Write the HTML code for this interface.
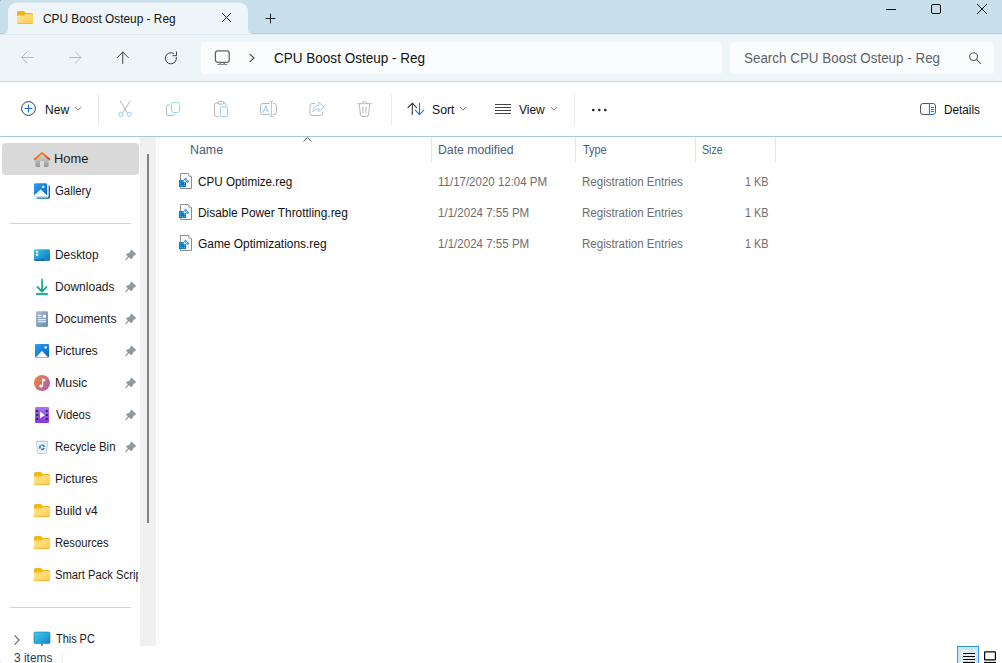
<!DOCTYPE html>
<html lang="en">
<head>
<meta charset="utf-8">
<title>CPU Boost Osteup - Reg</title>
<style>
*{box-sizing:border-box;margin:0;padding:0}
html,body{width:1002px;height:663px;overflow:hidden;background:#fff}
body{position:relative;font-family:"Liberation Sans",sans-serif;font-size:12px;color:#111}
.abs{position:absolute}
.t{position:absolute;white-space:nowrap;line-height:16px;height:16px;transform-origin:0 50%}
svg{position:absolute;overflow:visible}
#titlebar{left:0;top:0;width:1002px;height:34px;background:#c8e0eb;border-bottom:1px solid #b9d1de}
#tab{left:8px;top:3px;width:240px;height:31px;background:#edf5f9;border-radius:8px 8px 0 0}
#nav{left:0;top:34px;width:1002px;height:47px;background:#edf5f9}
#navline{left:0;top:81px;width:1002px;height:1px;background:#c8d8e1}
#addr{left:201px;top:42px;width:521px;height:32px;background:#fafcfe;border-radius:4px}
#search{left:730px;top:42px;width:264px;height:32px;background:#fafcfe;border-radius:4px}
#toolbar{left:0;top:82px;width:1002px;height:54px;background:#fff}
#toolline{left:0;top:136px;width:1002px;height:1px;background:#a9c7d6}
.vsep{position:absolute;width:1px;background:#eaeaea}
#side{left:0;top:137px;width:140px;height:509px;background:#fff;overflow:hidden}
#track{left:140px;top:137px;width:16px;height:509px;background:#f0f0f0}
#thumb{left:147px;top:154px;width:2px;height:369px;background:#828282}
#sel{left:2px;top:143px;width:137px;height:32px;background:#d9d9d9;border-radius:4px}
.hl{position:absolute;left:10px;width:121px;height:1px;background:#d2d2d2}
.nav-t{color:#1a1a1a}
.hdr{color:#4c607a}
.gray{color:#6d6d6d}
.colsep{position:absolute;top:137px;width:1px;height:25px;background:#e5e5e5}
</style>
</head>
<body>
<!-- title bar -->
<div class="abs" id="titlebar"></div>
<div class="abs" id="tab"></div>
<div class="abs" id="nav"></div>
<div class="abs" id="navline"></div>
<div class="abs" id="addr"></div>
<div class="abs" id="search"></div>
<div class="abs" id="toolbar"></div>
<div class="abs" id="toolline"></div>

<div class="abs" style="left:0;top:34px;width:1002px;height:1px;background:#e0ecf3"></div>
<div class="abs" style="left:0;top:0;width:1px;height:1px;background:#93a7b3"></div>
<div class="abs" style="left:0;top:662px;width:1px;height:1px;background:#e4e7e9"></div>
<div class="abs" style="left:14px;top:2px;width:228px;height:1px;background:#dbe7ec"></div>
<!-- tab contents -->
<div class="t" id="tabtitle" style="left:43px;top:11px;transform:scaleX(0.989)">CPU Boost Osteup - Reg</div>


<!-- shared gradients -->
<svg width="0" height="0" style="left:0;top:0">
<defs>
<linearGradient id="gFold" x1="0" y1="0" x2="1" y2="1"><stop offset="0" stop-color="#ffe594"/><stop offset="1" stop-color="#ffcd4c"/></linearGradient>
<linearGradient id="gBlue" x1="0" y1="0" x2="1" y2="1"><stop offset="0" stop-color="#2f9df5"/><stop offset="1" stop-color="#0b63b6"/></linearGradient>
<linearGradient id="gDesk" x1="0" y1="0" x2="1" y2="1"><stop offset="0" stop-color="#33cbe4"/><stop offset="1" stop-color="#0c6fc4"/></linearGradient>
<linearGradient id="gDoc" x1="0" y1="0" x2="1" y2="1"><stop offset="0" stop-color="#a9bdd6"/><stop offset="1" stop-color="#6b89ae"/></linearGradient>
<linearGradient id="gMus" x1="0" y1="0.2" x2="1" y2="0.9"><stop offset="0" stop-color="#f5853a"/><stop offset="1" stop-color="#a957b4"/></linearGradient>
<linearGradient id="gVid" x1="0" y1="0" x2="0" y2="1"><stop offset="0" stop-color="#a974ee"/><stop offset="1" stop-color="#8638d6"/></linearGradient>
<linearGradient id="gRoof" x1="0" y1="0" x2="1" y2="1"><stop offset="0" stop-color="#ff9a1a"/><stop offset="1" stop-color="#d8461a"/></linearGradient>
<linearGradient id="gHouse" x1="0" y1="0" x2="0" y2="1"><stop offset="0" stop-color="#dadada"/><stop offset="1" stop-color="#979797"/></linearGradient>
<linearGradient id="gDl" x1="0" y1="0" x2="0" y2="1"><stop offset="0" stop-color="#23c585"/><stop offset="1" stop-color="#159f93"/></linearGradient>
<linearGradient id="gPc" x1="0" y1="0" x2="1" y2="1"><stop offset="0" stop-color="#3fd0e8"/><stop offset="1" stop-color="#1283cf"/></linearGradient>
<symbol id="folder" viewBox="0 0 16 13" overflow="visible">
<path d="M0 1.6Q0 0 1.6 0H6.4Q7 0 7.4 .5L8.6 2H14.4Q16 2 16 3.6V11.4Q16 13 14.4 13H1.6Q0 13 0 11.4Z" fill="#f2b417"/>
<path d="M0 4.4H7Q7.6 4.4 8 4L8.4 3.6Q8.8 3.3 9.4 3.3H14.6Q16 3.3 16 4.7V11.4Q16 13 14.4 13H1.6Q0 13 0 11.4Z" fill="url(#gFold)"/>
<path d="M.3 12.2Q.8 13 1.6 13H14.4Q15.2 13 15.7 12.2Z" fill="#eaa91a" opacity=".8"/>
</symbol>
<symbol id="pin" viewBox="0 0 22 20" overflow="visible">
<path d="M11.6 5L16 9.06L13.3 10.9L11.9 13.7L10.6 13.6L9.06 12.1L5.9 14.95L5.4 14.35L8.16 11.6L6.5 9.97L6.5 9.2L9.97 7.7L10.4 5.9Z" fill="#8c999f" stroke="#8c999f" stroke-width=".5" stroke-linejoin="round"/>
</symbol>
<symbol id="reg" viewBox="0 0 15 18" overflow="visible">
<path d="M2.500 1.500H10.500L13.500 4.500V16.500H2.500Z" fill="#fff" stroke="#8e8e8e" stroke-width="1" stroke-linejoin="round"/>
<path d="M10.500 1.500V4.500H13.500" fill="#f2f2f2" stroke="#9a9a9a" stroke-width=".8" stroke-linejoin="round"/>
<rect x="5" y="4" width="6" height="11" fill="#f3f5f7"/>
<path d="M1 8H5.700V10.300H8V15H1Z" fill="#0b79c8"/>
<g fill="#49c0fb"><rect x="1.900" y="8.800" width="1" height="1"/><rect x="4" y="8.800" width="1" height="1"/><rect x="1.900" y="11" width="1" height="1"/><rect x="4" y="11" width="1" height="1" fill="#0b5fa3"/><rect x="6.100" y="11" width="1" height="1"/><rect x="1.900" y="13.100" width="1" height="1"/><rect x="4" y="13.100" width="1" height="1"/><rect x="6.100" y="13.100" width="1" height="1"/></g>
<path d="M7.500 5.700L9.100 7.300L7.500 8.900L5.900 7.300Z" fill="#1b93de"/><path d="M9.600 7.800L11.200 9.400L9.600 11L8 9.400Z" fill="#1b93de"/>
<rect x="7.100" y="6.900" width=".8" height=".8" fill="#7fd4ff"/><rect x="9.200" y="9" width=".8" height=".8" fill="#7fd4ff"/>
</symbol>
</defs>
</svg>

<!-- tab icons -->
<svg style="left:17px;top:11px" width="16" height="13"><use href="#folder" width="16" height="13"/></svg>
<svg style="left:222px;top:13px" width="9" height="9" viewBox="0 0 9 9"><path d="M0 0L9 9M9 0L0 9" stroke="#1f1f1f" stroke-width="1" fill="none"/></svg>
<svg style="left:265px;top:13px" width="11" height="11" viewBox="0 0 11 11"><path d="M.7 5.5H10.4M5.5 .7V10.4" stroke="#1f1f1f" stroke-width="1" fill="none"/></svg>
<!-- window controls -->
<svg style="left:886px;top:9px" width="10" height="1" viewBox="0 0 10 1"><rect width="10" height="1" fill="#111"/></svg>
<svg style="left:931px;top:4px" width="10" height="10" viewBox="0 0 10 10"><rect x=".5" y=".5" width="9" height="9" rx="1.5" fill="none" stroke="#111" stroke-width="1"/></svg>
<svg style="left:977px;top:4px" width="10" height="10" viewBox="0 0 10 10"><path d="M0 0L10 10M10 0L0 10" stroke="#111" stroke-width="1" fill="none"/></svg>
<!-- nav icons -->
<svg style="left:21px;top:51px" width="13" height="13" viewBox="0 0 13 13"><path d="M12 6.5H.8M6 1L.5 6.5L6 12" stroke="#b3bbc1" stroke-width="1" fill="none" stroke-linecap="round" stroke-linejoin="round"/></svg>
<svg style="left:69px;top:51px" width="13" height="13" viewBox="0 0 13 13"><path d="M.5 6.5H11.7M6.5 1L12 6.5L6.5 12" stroke="#b3bbc1" stroke-width="1" fill="none" stroke-linecap="round" stroke-linejoin="round"/></svg>
<svg style="left:116px;top:51px" width="13" height="13" viewBox="0 0 13 13"><path d="M6.75 12.5V1M1.2 6.6L6.75 1L12.3 6.6" stroke="#444" stroke-width="1" fill="none" stroke-linecap="round" stroke-linejoin="round"/></svg>
<svg style="left:164px;top:51px" width="14" height="14" viewBox="0 0 14 14"><path d="M12.4 6.3A5.6 5.6 0 1 1 9.6 2.35M12.5 1V4.7H8.8" stroke="#444" stroke-width="1" fill="none" stroke-linecap="round" stroke-linejoin="round"/></svg>
<svg style="left:214px;top:50px" width="16" height="16" viewBox="0 0 16 16"><rect x="1.4" y=".9" width="13.8" height="11.4" rx="2.2" fill="none" stroke="#636363" stroke-width="1.3"/><path d="M6.2 12.4V14.3M10.2 12.4V14.3" stroke="#636363" stroke-width="1.2"/><path d="M3.6 14.5H13" stroke="#8a8a8a" stroke-width="1" stroke-linecap="round"/></svg>
<svg style="left:249px;top:54px" width="6" height="8" viewBox="0 0 6 8"><path d="M1 .3L5 4L1 7.7" stroke="#444" stroke-width="1.1" fill="none" stroke-linecap="round" stroke-linejoin="round"/></svg>
<svg style="left:969px;top:52px" width="12" height="12" viewBox="0 0 12 12"><circle cx="4.6" cy="4.6" r="3.9" fill="none" stroke="#555" stroke-width="1.1"/><path d="M7.4 7.4L11.3 11.3" stroke="#555" stroke-width="1.1" stroke-linecap="round"/></svg>

<!-- address / search -->
<div class="t" id="addrtxt" style="left:274px;top:50px;font-size:14px;transform:scaleX(0.966)">CPU Boost Osteup - Reg</div>
<div class="t" id="searchtxt" style="left:744px;top:50px;font-size:14px;color:#5e6266;transform:scaleX(0.958)">Search CPU Boost Osteup - Reg</div>

<!-- toolbar -->
<div class="t" id="tnew" style="top:102px;left:45px;transform:scaleX(1.003)">New</div>
<div class="t" id="tsort" style="top:102px;left:432px;transform:scaleX(1.022)">Sort</div>
<div class="t" id="tview" style="top:102px;left:519px;transform:scaleX(0.996)">View</div>
<div class="t" id="tdetails" style="top:102px;left:944px;transform:scaleX(0.980)">Details</div>
<div class="vsep" style="left:98px;top:94px;height:32px"></div>
<div class="vsep" style="left:391px;top:94px;height:32px"></div>
<div class="vsep" style="left:574px;top:94px;height:32px"></div>


<!-- tab concave corners -->
<svg style="left:3px;top:29px" width="5" height="5" viewBox="0 0 5 5"><path d="M5 0V5H0A5 5 0 0 0 5 0Z" fill="#edf5f9"/></svg>
<svg style="left:248px;top:29px" width="5" height="5" viewBox="0 0 5 5"><path d="M0 0V5H5A5 5 0 0 1 0 0Z" fill="#edf5f9"/></svg>
<!-- toolbar icons -->
<svg style="left:21px;top:101px" width="15" height="15" viewBox="0 0 15 15"><circle cx="7.5" cy="7.5" r="6.9" fill="#fafafa" stroke="#3d3d3d" stroke-width="1"/><path d="M4 7.5H11M7.5 4V11" stroke="#0f76d8" stroke-width="1.1" stroke-linecap="round"/></svg>
<svg class="chev" style="left:75px;top:107px" width="6" height="4" viewBox="0 0 6 4"><path d="M.4 .5L3 3.2L5.6 .5" stroke="#7a7a7a" stroke-width="1" fill="none" stroke-linecap="round" stroke-linejoin="round"/></svg>
<svg class="chev" style="left:460px;top:107px" width="6" height="4" viewBox="0 0 6 4"><path d="M.4 .5L3 3.2L5.6 .5" stroke="#7a7a7a" stroke-width="1" fill="none" stroke-linecap="round" stroke-linejoin="round"/></svg>
<svg class="chev" style="left:551px;top:107px" width="6" height="4" viewBox="0 0 6 4"><path d="M.4 .5L3 3.2L5.6 .5" stroke="#7a7a7a" stroke-width="1" fill="none" stroke-linecap="round" stroke-linejoin="round"/></svg>
<!-- cut -->
<svg style="left:118px;top:101px" width="14" height="17" viewBox="0 0 14 17"><path d="M2.4 .3L9 11.4M11.9 .3L5.2 11.4" stroke="#b4b4b4" stroke-width="1" fill="none" stroke-linecap="round"/><circle cx="2.8" cy="13.3" r="2.1" fill="none" stroke="#9ccbf3" stroke-width="1"/><circle cx="11.2" cy="13.3" r="2.1" fill="none" stroke="#9ccbf3" stroke-width="1"/></svg>
<!-- copy -->
<svg style="left:166px;top:102px" width="14" height="14" viewBox="0 0 14 14"><path d="M3.6 3.1H2.6Q.5 3.1 .5 5.2V11.4Q.5 13.5 2.6 13.5H6.8Q8.7 13.5 8.9 12" stroke="#b8b8b8" stroke-width="1" fill="none" stroke-linecap="round"/><rect x="5.5" y=".5" width="8" height="10" rx="2.1" fill="none" stroke="#9ccbf3" stroke-width="1"/></svg>
<!-- paste -->
<svg style="left:214px;top:101px" width="14" height="16" viewBox="0 0 14 16"><path d="M4.3 2.2H2.3Q.5 2.2 .5 4V13.7Q.5 15.5 2.3 15.5H4.6M9.7 2.2H10.3Q12 2.2 12 3.9" stroke="#b8b8b8" stroke-width="1" fill="none" stroke-linecap="round"/><rect x="4" y=".5" width="6" height="2.6" rx="1.3" fill="none" stroke="#b8b8b8" stroke-width="1"/><rect x="6.3" y="5.7" width="7.2" height="9.8" rx="1.6" fill="none" stroke="#9ccbf3" stroke-width="1"/></svg>
<!-- rename -->
<svg style="left:260px;top:101px" width="17" height="16" viewBox="0 0 17 16"><path d="M9.4 2.5H3Q.5 2.5 .5 5V11Q.5 13.5 3 13.5H9.4M13.3 2.5H14Q16.5 2.5 16.5 5V11Q16.5 13.5 14 13.5H13.3" stroke="#b8b8b8" stroke-width="1" fill="none" stroke-linecap="round"/><path d="M3.2 11.2L5.8 4.8L8.4 11.2M4.1 9.2H7.5" stroke="#9ccbf3" stroke-width="1" fill="none" stroke-linecap="round" stroke-linejoin="round"/><path d="M9.8 .6H13.100M9.8 15.400H13.100M11.450 .6V15.400" stroke="#9ccbf3" stroke-width="1" fill="none" stroke-linecap="round"/></svg>
<!-- share -->
<svg style="left:309px;top:101px" width="16" height="16" viewBox="0 0 16 16"><path d="M5.600 2.500H3.300Q1 2.500 1 4.800V12.200Q1 14.500 3.300 14.500H11.200Q13.500 14.500 13.500 12.200V11.400" stroke="#b8b8b8" stroke-width="1" fill="none" stroke-linecap="round"/><path d="M9.800 1.200L15.200 6L9.800 10.600V8Q5.600 7.800 4 11Q4.200 4.600 9.800 4Z" stroke="#9ccbf3" stroke-width="1" fill="none" stroke-linejoin="round"/></svg>
<!-- delete -->
<svg style="left:357px;top:101px" width="15" height="16" viewBox="0 0 15 16"><path d="M.8 2.700H14.200M5 2.500Q5 .5 7.500 .5Q10 .5 10 2.500M2.200 2.900L3.500 14Q3.700 15.500 5.200 15.500H9.800Q11.300 15.500 11.500 14L12.800 2.900M6 6V12M9 6V12" stroke="#b8b8b8" stroke-width="1" fill="none" stroke-linecap="round" stroke-linejoin="round"/></svg>
<!-- sort -->
<svg style="left:407px;top:102px" width="18" height="14" viewBox="0 0 18 14"><path d="M5.300 12.500V1.200M1 5.700L5.300 1.200L9.600 5.700" stroke="#3d3d3d" stroke-width="1.100" fill="none" stroke-linecap="round" stroke-linejoin="round"/><path d="M12.500 1.200V12.500M8.300 8.200L12.500 12.600L16.800 8.200" stroke="#1278d6" stroke-width="1.100" fill="none" stroke-linecap="round" stroke-linejoin="round"/></svg>
<!-- view -->
<svg style="left:495px;top:104px" width="16" height="10" viewBox="0 0 16 10"><path d="M0 .5H16M0 3.500H16M0 6.500H16M0 9.500H16" stroke="#444" stroke-width="1" fill="none"/></svg>
<!-- more -->
<svg style="left:591px;top:108px" width="17" height="4" viewBox="0 0 17 4"><circle cx="2.300" cy="2" r="1.300" fill="#1f1f1f"/><circle cx="8.300" cy="2" r="1.300" fill="#1f1f1f"/><circle cx="14.300" cy="2" r="1.300" fill="#1f1f1f"/></svg>
<!-- details -->
<svg style="left:920px;top:103px" width="16" height="12" viewBox="0 0 16 12"><path d="M9.400 .5H3Q.5 .5 .5 3V9Q.5 11.500 3 11.500H9.400" stroke="#555" stroke-width="1" fill="#fbfbfb"/><path d="M9.400 .5H13Q15.500 .5 15.500 3V9Q15.500 11.500 13 11.500H9.400Z" stroke="#0f78d4" stroke-width="1" fill="#fff"/><path d="M11.200 4.500H13.400M11.200 6.500H13.400M11.200 8.500H13.400" stroke="#0f78d4" stroke-width="1" stroke-linecap="round"/></svg>

<!-- sidebar -->
<div class="abs" id="side"></div>
<div class="abs" id="track"></div>
<div class="abs" id="thumb"></div>
<div class="abs" id="sel"></div>
<div class="hl" style="top:223px"></div>
<div class="hl" style="top:607px"></div>
<div class="t nav-t" id="s1" style="left:54px;top:151px;transform:scaleX(1.073)">Home</div>
<div class="t nav-t" id="s2" style="left:55px;top:183px;transform:scaleX(0.949)">Gallery</div>
<div class="t nav-t" id="s3" style="left:55px;top:247px;transform:scaleX(0.990)">Desktop</div>
<div class="t nav-t" id="s4" style="left:55px;top:279px;transform:scaleX(1.003)">Downloads</div>
<div class="t nav-t" id="s5" style="left:55px;top:311px;transform:scaleX(1.014)">Documents</div>
<div class="t nav-t" id="s6" style="left:55px;top:343px;transform:scaleX(0.986)">Pictures</div>
<div class="t nav-t" id="s7" style="left:55px;top:375px;transform:scaleX(1.031)">Music</div>
<div class="t nav-t" id="s8" style="left:56px;top:407px;transform:scaleX(0.950)">Videos</div>
<div class="t nav-t" id="s9" style="left:55px;top:439px;transform:scaleX(0.955)">Recycle Bin</div>
<div class="t nav-t" id="s10" style="left:55px;top:471px;transform:scaleX(0.986)">Pictures</div>
<div class="t nav-t" id="s11" style="left:55px;top:503px;transform:scaleX(0.999)">Build v4</div>
<div class="t nav-t" id="s12" style="left:55px;top:535px;transform:scaleX(0.937)">Resources</div>
<div class="t nav-t" id="s13" style="left:55.3px;top:567px;width:89px;overflow:hidden;transform: scaleX(0.935)">Smart Pack Scripts</div>
<div class="t nav-t" id="s14" style="left:56px;top:631px;transform:scaleX(0.908)">This PC</div>


<!-- sidebar icons -->
<!-- home -->
<svg style="left:33px;top:151px" width="18" height="17" viewBox="0 0 18 17"><path d="M2.400 8.200L9 2.600L15.600 8.200V14.600Q15.600 15.900 14.300 15.900H11V10H7V15.900H3.700Q2.400 15.900 2.400 14.600Z" fill="url(#gHouse)"/><path d="M1.700 8.300L9 1.900L16.300 8.300" stroke="url(#gRoof)" stroke-width="1.900" fill="none" stroke-linecap="round" stroke-linejoin="round"/></svg>
<!-- gallery -->
<svg style="left:34px;top:183px" width="16" height="16" viewBox="0 0 16 16"><path d="M14.600 2.400H15Q16 2.400 16 3.400V14.400Q16 15.800 14.600 15.800H3.400Q2.400 15.800 2.400 14.800V14.400H13.200Q14.600 14.400 14.600 13Z" fill="#0f6cbd"/><rect x="0" y=".2" width="13.200" height="13.400" rx="1.300" fill="url(#gBlue)"/><path d="M0 12.600L6.700 6.400L13.200 12.600Q13.200 13.600 11.900 13.600H1.300Q0 13.600 0 12.600Z" fill="#fff"/><path d="M3.600 9.300L6.700 6.400L9.800 9.300Q6.700 10.300 3.600 9.300Z" fill="#cfe6fb" opacity=".7"/><rect x="8.100" y="2.800" width="2.200" height="2.200" rx=".5" fill="#fff"/></svg>
<!-- desktop -->
<svg style="left:34px;top:249px" width="16" height="12" viewBox="0 0 16 12"><rect x="0" y=".2" width="16" height="11.500" rx="1.300" fill="url(#gDesk)"/><rect x="1.900" y="1.700" width="2.300" height="2" fill="#fff"/><rect x="1.900" y="4.700" width="2.300" height="2" fill="#fff"/><path d="M.4 11.200H11" stroke="#0a4a86" stroke-width="1"/><path d="M12.400 11.200H13.200M14.400 11.200H15.200" stroke="#0a4a86" stroke-width="1"/></svg>
<!-- downloads -->
<svg style="left:35px;top:278px" width="14" height="18" viewBox="0 0 14 18"><path d="M7 1.400V13.400M2.500 9L7 13.600L11.500 9" stroke="url(#gDl)" stroke-width="1.800" fill="none" stroke-linecap="round" stroke-linejoin="round"/><rect x="1" y="15" width="12" height="1.900" rx=".6" fill="#1db78c"/></svg>
<!-- documents -->
<svg style="left:36px;top:311px" width="12" height="16" viewBox="0 0 12 16"><rect x="0" y=".2" width="12" height="15.700" rx="1.300" fill="url(#gDoc)"/><path d="M2.100 4.200H5.400M2.100 6.300H5.400M2.100 8.700H10M2.100 10.800H10" stroke="#fff" stroke-width="1.100"/><rect x="7" y="3.700" width="3" height="3.100" fill="#fff"/></svg>
<!-- pictures -->
<svg style="left:35px;top:344px" width="14" height="14" viewBox="0 0 14 14"><rect x="0" y="0" width="14" height="13.600" rx="1.300" fill="url(#gBlue)"/><path d="M1.200 13L7 7.100L12.800 13Z" fill="#fff"/><path d="M4.300 9.900L7 7.100L9.700 9.900Q7 10.700 4.300 9.900Z" fill="#d7ebfc" opacity=".6"/><circle cx="10.700" cy="3.400" r="1.200" fill="#fff"/></svg>
<!-- music -->
<svg style="left:34px;top:375px" width="16" height="16" viewBox="0 0 16 16"><circle cx="8" cy="8" r="8" fill="url(#gMus)"/><ellipse cx="7" cy="11" rx="1.900" ry="1.600" fill="#fff"/><path d="M8.100 11V3.300L11.200 4.200V6.500L9.200 5.900V11Z" fill="#fff"/></svg>
<!-- videos -->
<svg style="left:35px;top:407px" width="14" height="16" viewBox="0 0 14 16"><rect x="0" y="0" width="14" height="16" rx="1.300" fill="url(#gVid)"/><g fill="#3b2170"><rect x="1.200" y="3" width="2" height="2"/><rect x="1.200" y="7" width="2" height="2"/><rect x="1.200" y="11" width="2" height="2"/><rect x="10.800" y="3" width="2" height="2"/><rect x="10.800" y="7" width="2" height="2"/><rect x="10.800" y="11" width="2" height="2"/></g><path d="M5 4.800L9.900 8L5 11.300Z" fill="#fff"/></svg>
<!-- recycle bin -->
<svg style="left:35px;top:440px" width="14" height="14" viewBox="0 0 14 14"><path d="M1.300 1.600H12.700L11.500 12.600Q11.400 13.500 10.400 13.500H3.600Q2.600 13.500 2.500 12.600Z" fill="#eef1f4" stroke="#b9c0c6" stroke-width=".8"/><path d="M1 1.500Q7 .2 13 1.500" stroke="#c9ced3" stroke-width=".9" fill="none"/><path d="M6.62 5.03A2.2 2.2 0 0 1 9.19 7.01M9.07 7.95A2.2 2.2 0 0 1 6.07 9.19M5.31 8.61A2.2 2.2 0 0 1 5.74 5.40" stroke="#1b7fd8" stroke-width="1.600" fill="none"/></svg>
<!-- this pc -->
<svg style="left:14px;top:635px" width="6" height="10" viewBox="0 0 6 10"><path d="M.7 .6L5.200 5L.7 9.400" stroke="#6b6b6b" stroke-width="1.100" fill="none" stroke-linecap="round" stroke-linejoin="round"/></svg>
<svg style="left:34px;top:632px" width="16" height="14" viewBox="0 0 16 14"><rect x="0" y="0" width="16" height="11.600" rx="1.300" fill="url(#gPc)" stroke="#1276b8" stroke-width=".6"/><path d="M8 11.600V14" stroke="#4d6b80" stroke-width="1.400"/></svg>
<svg style="left:34px;top:472px" width="16" height="13"><use href="#folder" width="16" height="13"/></svg>
<svg style="left:34px;top:504px" width="16" height="13"><use href="#folder" width="16" height="13"/></svg>
<svg style="left:34px;top:536px" width="16" height="13"><use href="#folder" width="16" height="13"/></svg>
<svg style="left:34px;top:568px" width="16" height="13"><use href="#folder" width="16" height="13"/></svg>
<svg style="left:120px;top:245px" width="22" height="20"><use href="#pin" width="22" height="20"/></svg>
<svg style="left:120px;top:277px" width="22" height="20"><use href="#pin" width="22" height="20"/></svg>
<svg style="left:120px;top:309px" width="22" height="20"><use href="#pin" width="22" height="20"/></svg>
<svg style="left:120px;top:341px" width="22" height="20"><use href="#pin" width="22" height="20"/></svg>
<svg style="left:120px;top:373px" width="22" height="20"><use href="#pin" width="22" height="20"/></svg>
<svg style="left:120px;top:405px" width="22" height="20"><use href="#pin" width="22" height="20"/></svg>
<svg style="left:120px;top:437px" width="22" height="20"><use href="#pin" width="22" height="20"/></svg>

<!-- column headers -->
<div class="colsep" style="left:431px"></div>
<div class="colsep" style="left:575px"></div>
<div class="colsep" style="left:695px"></div>
<div class="colsep" style="left:775px"></div>
<div class="t hdr" id="h1" style="left:190px;top:142px;transform:scaleX(1.033)">Name</div>
<div class="t hdr" id="h2" style="left:438px;top:142px;transform:scaleX(1.020)">Date modified</div>
<div class="t hdr" id="h3" style="left:583px;top:142px;transform:scaleX(0.902)">Type</div>
<div class="t hdr" id="h4" style="left:702px;top:142px;transform:scaleX(0.883)">Size</div>


<!-- sort caret -->
<svg style="left:303px;top:137px" width="9" height="5" viewBox="0 0 9 5"><path d="M.5 4.500L4.500 .6L8.500 4.500" stroke="#555" stroke-width="1" fill="none"/></svg>
<!-- file icons -->
<svg style="left:178px;top:172px" width="15" height="18"><use href="#reg" width="15" height="18"/></svg>
<svg style="left:178px;top:203px" width="15" height="18"><use href="#reg" width="15" height="18"/></svg>
<svg style="left:178px;top:234px" width="15" height="18"><use href="#reg" width="15" height="18"/></svg>

<!-- status view buttons -->
<div class="abs" style="left:957px;top:646px;width:22px;height:20px;background:#cce6f5;border:1px solid #2b9bdd"></div>
<div class="abs" style="left:961px;top:650px;width:15px;height:14px;background:#e4f0f8"></div>
<svg style="left:963px;top:653px" width="12" height="10" viewBox="0 0 12 10"><path d="M0 .5H12M0 3.500H12M0 6.500H12" stroke="#000" stroke-width="1.100"/><rect x="0" y="8.900" width="12" height="2" fill="#000"/></svg>
<svg style="left:984px;top:651px" width="12" height="12" viewBox="0 0 12 12"><rect x=".6" y=".8" width="10.800" height="8" rx=".6" fill="#fff" stroke="#000" stroke-width="1.200"/><rect x="0" y="10.900" width="12" height="2" fill="#000"/></svg>
<div class="abs" style="left:62px;top:652px;width:1px;height:11px;background:#ececec"></div>

<!-- rows -->
<div class="t" id="r1n" style="left:198px;top:174px;transform:scaleX(0.975)">CPU Optimize.reg</div>
<div class="t gray" id="r1d" style="left:438px;top:174px;transform:scaleX(0.958)">11/17/2020 12:04 PM</div>
<div class="t gray" id="r1t" style="left:582px;top:174px;transform:scaleX(0.963)">Registration Entries</div>
<div class="t gray" id="r1s" style="left:745px;top:174px;transform:scaleX(0.904)">1 KB</div>
<div class="t" id="r2n" style="left:198px;top:205px;transform:scaleX(0.991)">Disable Power Throttling.reg</div>
<div class="t gray" id="r2d" style="left:438px;top:205px;transform:scaleX(0.963)">1/1/2024 7:55 PM</div>
<div class="t gray" id="r2t" style="left:582px;top:205px;transform:scaleX(0.963)">Registration Entries</div>
<div class="t gray" id="r2s" style="left:745px;top:205px;transform:scaleX(0.904)">1 KB</div>
<div class="t" id="r3n" style="left:198px;top:236px;transform:scaleX(0.994)">Game Optimizations.reg</div>
<div class="t gray" id="r3d" style="left:438px;top:236px;transform:scaleX(0.963)">1/1/2024 7:55 PM</div>
<div class="t gray" id="r3t" style="left:582px;top:236px;transform:scaleX(0.963)">Registration Entries</div>
<div class="t gray" id="r3s" style="left:745px;top:236px;transform:scaleX(0.904)">1 KB</div>

<div class="abs" style="left:158px;top:137px;width:1px;height:509px;background:#f6f6f6"></div>
<!-- status bar -->
<div class="t" id="status" style="left:14px;top:650px;color:#1e395b;transform:scaleX(0.993)">3 items</div>
</body>
</html>
